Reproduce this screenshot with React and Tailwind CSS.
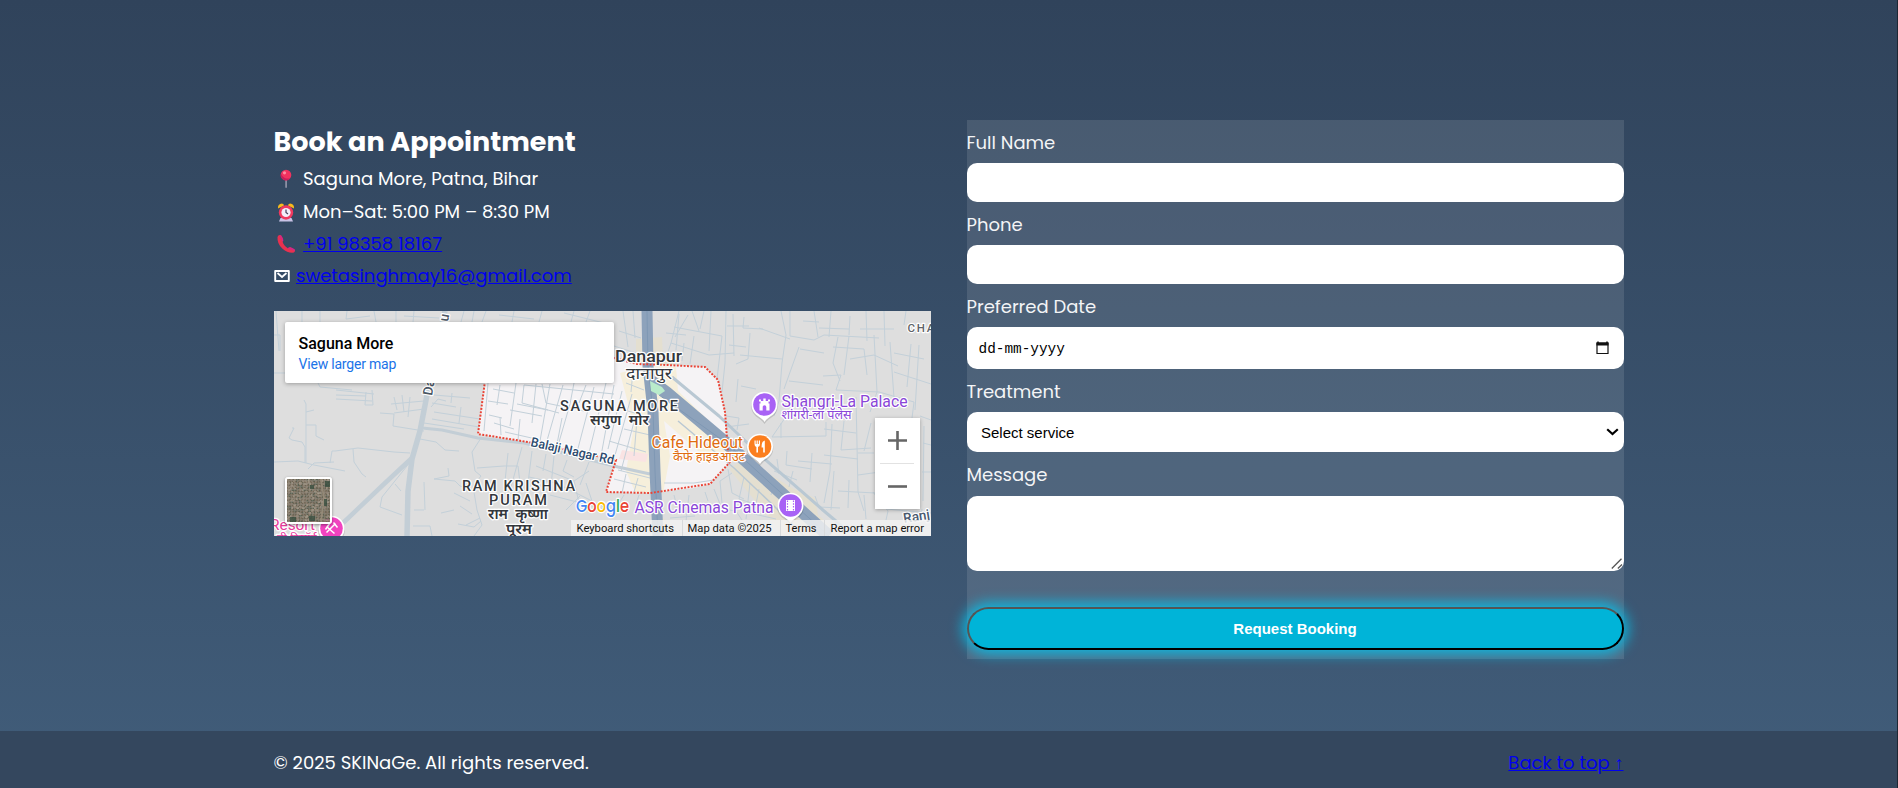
const MINOR_ROADS = [
  // north-west strip
  "M0 24H6V40", "M0 62H14", "M2 0L5 40", "M28 0V11", "M46 0V11", "M73 0L72 8L96 5", "M100 0L102 11", "M122 0V11", "M140 0L139 11M130 5L165 7",
  "M190 0L187 11M200 0L198 11M212 0L208 11", "M225 4L260 8M240 0L238 11M268 0L265 11M290 2L330 12M300 0L297 11M316 0L312 11",
  // west
  "M44 72L46 76L78 79", "M62 79L100 83M62 84L92 85M62 88L98 90", "M92 81L91 94H99L98 79", "M30 89L32 93V152", "M32 101L40 99", "M32 114H42V125L50 129",
  "M18 117L20 117L15 127L18 129L28 131L31 136V152", "M0 151L24 150L40 154L71 160", "M34 158L40 152L60 151", "M58 140L61 140L84 137L120 141L136 142",
  "M79 138L80 151L88 163L92 166", "M58 140L56 152", "M137 150L108 186L106 196L128 204", "M121 173L127 180", "M106 102L120 103L119 115L150 120",
  "M120 86L123 99M128 84L130 101M117 93L150 90M120 102L150 98M136 86L134 106", "M160 84L196 87M158 92L182 96M158 108L205 116M157 96L164 88L172 90",
  "M160 101L206 108M178 82L177 92M187 96L185 112M150 112L190 118", "M146 128L162 131L171 139L185 140", "M174 157L175 165L160 168L181 170L186 175L196 178",
  "M150 171L151 199M140 199H150M139 215L156 215L158 225", "M184 213L200 216L207 210", "M207 127L198 141L201 160L207 165L199 175L203 199L208 214L200 225",
  "M203 157L230 155L244 155L246 172M234 142L231 170M248 136L240 165L236 180", "M258 140L254 172M272 143L269 160M280 145L277 175M293 149L289 160L300 166M315 151L306 174",
  "M262 155L300 170L315 160M255 166L282 172L330 196M300 170L306 196M312 172L318 190", "M206 207L192 214M276 184L330 198M292 199L306 185", "M180 182L196 190M186 195L198 203M167 202L180 199",
  // Saguna More block
  "M214 72L210 120M219 78L240 82M214 90L234 93M215 104L228 107M226 74L223 94M242 72L236 115M250 74L248 92L285 102",
  "M262 73L258 112M276 73L266 130M289 74L272 133M300 72L296 93M296 93L283 138M312 74L305 92M320 76L302 145M332 72L315 142",
  "M236 99L268 105M231 121L262 128M243 93L274 99M268 73L272 92L310 100M220 112L240 118M226 106L227 124M246 108L244 129M288 107L283 133",
  "M340 74L327 145M348 80L334 138M358 83L338 155M365 92L347 160M354 100L374 106M350 118L376 124M335 130L372 141M344 159L376 167M340 168L372 176M352 163L348 182M364 167L360 181M390 172H420L440 169",
  "M352 72L370 79M359 60L357 81M363 108L360 145M250 74L290 78L340 83",
  // north, above the boundary
  "M340 35L368 44M345 20L367 27M349 0L354 36M359 0L361 27", "M391 50L397 32L405 0M397 32L435 44L460 42", "M405 3L402 39M414 4L401 26M400 16L448 25",
  "M418 0L425 20M430 0L426 18M437 0L435 40M448 25L443 68M452 0L451 52L448 81", "M392 22L412 24M410 32L408 50M420 25L416 53M453 15H475M459 3L460 45M470 6L469 17L489 18",
  "M476 22L474 48L462 53M485 17L516 28M455 34L472 36M466 44L508 48M507 0L512 24L508 52L505 90L500 105", "M516 0V25L540 29L550 24L605 27",
  "M540 0L544 26M557 0L555 26M576 5L575 24M592 0L593 30M610 0L611 35M529 10L545 11M545 17L575 18M586 18H620M632 0L630 14",
  // east
  "M525 36L510 78M515 70L549 74M526 38L550 42M564 26L559 52L566 70M559 36L590 38L593 64M575 25L570 64M549 65L567 64L562 79L605 81",
  "M576 48L600 44L624 55M600 24L603 81L596 101M616 31L620 87M620 61L657 73M637 33L633 76M620 42L650 48M645 34L641 99M605 81L640 91L638 107",
  "M467 75L482 78M464 68L462 91M511 107L498 126L552 125L552 111M452 105L465 107L463 119M452 116L475 113M507 112V127",
  "M582 86L584 181L590 200M550 118L582 122M558 113L556 160L550 192M570 110L567 139L597 137M584 142H600M550 144L584 148M584 164L613 160M513 140L512 154L538 158",
  "M519 160L515 176M524 150L558 153M538 142L536 171M503 148L505 163M500 160L523 169M560 160L557 199M564 180L601 182M575 169L574 197M590 184L592 208M599 181L614 200L612 209",
  "M612 198L657 202M648 198L647 209M646 105L657 109M649 132L657 134M648 161H657M650 115L649 190M597 112L590 140",
  // south
  "M454 158L458 182L470 188M458 162L446 170L448 192M470 166L465 188L490 196M400 184L402 192M415 184L412 210M431 181L434 190M440 178L448 198L462 200L468 209",
  "M476 172L472 208M485 178L480 203L502 208M396 207L421 205M365 184L362 193M350 184L345 192M500 172L497 184M541 185L545 196L566 197",
];

const HALO = { stroke: "#fff", strokeWidth: 2.4, paintOrder: "stroke", strokeLinejoin: "round" };

function Label({ x, y, w, size, color = "#33373c", children, weight = 500, spaced, rotate }) {
  return (
    <text
      x={x}
      y={y}
      fontSize={size}
      fill={color}
      fontWeight={weight}
      textLength={w}
      lengthAdjust={spaced ? "spacing" : "spacingAndGlyphs"}
      transform={rotate ? `rotate(${rotate} ${x} ${y})` : undefined}
      {...HALO}
    >
      {children}
    </text>
  );
}

function Pin({ x, y, color, children }) {
  return (
    <g transform={`translate(${x} ${y})`}>
      <path d="M0 18.5C-2 15-5.500 13.200-8.500 11A13.300 13.300 0 1 1 8.500 11C5.500 13.200 2 15 0 18.500Z" fill="#00000022" transform="translate(0 1)" />
      <path d="M0 17.500C-2 14-5.500 12.500-8.300 10.200A13 13 0 1 1 8.300 10.200C5.500 12.500 2 14 0 17.500Z" fill="#fff" />
      <circle r="11.300" fill={color} />
      {children}
    </g>
  );
}

function Satellite() {
  const tones = ["#7b705f", "#85796a", "#6f6658", "#8f8472", "#6a6656", "#7f7464", "#5c6253", "#766b5a", "#9a907f"];
  const cells = [];
  for (let i = 0; i < 29; i++) {
    for (let j = 0; j < 29; j++) {
      const n = Math.abs(Math.floor(Math.sin(i * 127.1 + j * 311.7) * 43758));
      cells.push(<rect key={i + "-" + j} x={i * 1.5} y={j * 1.5} width={1.7} height={1.7} fill={tones[n % 9]} />);
    }
  }
  return (
    <svg viewBox="0 0 43 43" className="h-full w-full">
      {cells}
      <path d="M34 0L37 20L34 43" stroke="#958a78" strokeWidth="1.600" fill="none" />
      <path d="M23 6h4v4h-4zM38 2h5v6h-5zM3 38h6v5H3zM22 37h6v5h-6zM37 20h3v7h-3z" fill="#374d3f" opacity=".8" />
    </svg>
  );
}

function MapDrawing() {
  return (
    <svg viewBox="0 0 657 225" className="block h-full w-full font-['Roboto','Noto_Sans',sans-serif]">
      <defs>
        <clipPath id="area">
          <path d="M211 72L214 47H340L363 53L393 54L431 56L444 69L451 101L454 141L456 151L436 173L420 177L376 182L332 181L342 149L254 131L204 123Z" />
        </clipPath>
      </defs>
      <rect width="657" height="225" fill="#dedede" />
      <path d="M362 28L388 26L389 48L402 54L404 78L386 86H362ZM470 148L520 178L541 187L544 204L568 225H510L455 158ZM387 205L410 225H386Z" fill="#e4dfd0" />
      <path d="M211 72L214 47H340L363 53L393 54L431 56L444 69L451 101L454 141L456 151L436 173L420 177L376 182L332 181L342 149L254 131L204 123Z" fill="#f5f3f5" />
      <g clipPath="url(#area)" fill="#f6efdb">
        <path d="M346 62L372 55L402 56L404 80L456 130L450 150L424 140L390 110L396 145L389 183H362L352 160L360 115Z" />
        <path d="M348 139L374 143L372 151L345 148Z" fill="#fae3e3" />
      </g>
      <g fill="none" stroke="#c3d0d9" strokeWidth="1" strokeLinejoin="round">
        {MINOR_ROADS.map((d) => (
          <path key={d} d={d} />
        ))}
      </g>
      <g fill="none" stroke="#c3ced6" strokeLinejoin="round">
        <path d="M171 0L153 84L146 120L138 148L134 180L133 225" strokeWidth="5.500" />
        <path d="M139 146L110 173L69 212" strokeWidth="4.500" />
        <path d="M148 117L168 119L204 127L250 132L344 156L376 163" strokeWidth="3" />
        <path d="M393 70L440 109L480 147L545 204L570 225" strokeWidth="3" stroke="#b9c8d3" transform="translate(5 -4)" />
        <path d="M404 110L460 157L500 195L530 225" strokeWidth="1.500" stroke="#b9c8d3" />
      </g>
      <g fill="none" stroke="#8da2bb" strokeLinejoin="round">
        <path d="M373 0L374 55L379 100L381 160L384 225" strokeWidth="11" />
        <path d="M377 70L393 82L451 131L505 180L555 225" strokeWidth="12.500" />
      </g>
      <g fill="none" stroke="#7f98b4" strokeWidth="1">
        <path d="M373 0L374 55L379 100L381 160L384 225M385 84L451 131L505 180L555 225" />
      </g>
      <path d="M376 70L388 76L391 80L385 84L377 80Z" fill="#b9ebcb" />
      <path
        d="M211 70L204 123L254 131L342 149L332 181L376 182L436 173L456 151L454 141L451 101L444 69L431 56L393 54L363 53L340 47"
        fill="none"
        stroke="#ea4335"
        strokeWidth="2"
        strokeDasharray="1.900 1.500"
      />

      <Label x={158} y={85} size={13.5} color="#4a5563" rotate={-80}>Da</Label>
      <Label x={174} y={11} size={13.5} color="#4a5563" rotate={-80}>u</Label>
      <Label x={341} y={51} w={67} size={17}>Danapur</Label>
      <Label x={352} y={68} w={46} size={16} weight={400}>दानापुर</Label>
      <Label x={286} y={100} w={118} size={14.5} spaced>SAGUNA MORE</Label>
      <Label x={316} y={114} w={59} size={14} weight={600}>सगुण &#160;मोर</Label>
      <Label x={256} y={135} w={85} size={13} color="#2c4a6e" rotate={12.5}>Balaji Nagar Rd</Label>
      <Label x={188} y={179.5} w={113} size={14.5} spaced>RAM KRISHNA</Label>
      <Label x={215} y={194} w={58} size={14.5} spaced>PURAM</Label>
      <Label x={214} y={208} w={60} size={14} weight={600}>राम &#160;कृष्णा</Label>
      <Label x={232} y={222.5} w={26} size={14} weight={600}>पूरम</Label>
      <Label x={633.5} y={21} w={27} size={11.5} color="#5f6368" spaced>CHA</Label>
      <Label x={630} y={212} size={13.5} color="#4a5a70" rotate={-9}>Ranj</Label>

      <Label x={507.5} y={95.5} w={126} size={16} color="#8a46d8" weight={400}>Shangri-La Palace</Label>
      <Label x={507.5} y={107.5} w={70} size={12} color="#8a46d8" weight={400}>शांगरी-ला पॅलेस</Label>
      <Label x={377.500} y={137} w={91.500} size={16} color="#e06c10" weight={400}>Cafe Hideout</Label>
      <Label x={399} y={149.500} w={72} size={12.5} color="#e06c10" weight={400}>कैफे हाइडआउट</Label>
      <Label x={360.500} y={202} w={139} size={16} color="#8a46d8" weight={400}>ASR Cinemas Patna</Label>
      <Label x={-4} y={218.5} w={45} size={15} color="#e6399b" weight={400}>Resort</Label>
      <Label x={3} y={230.5} w={40} size={11.5} color="#e6399b" weight={400}>डी रिसॉर्ट</Label>

      <Pin x={490.500} y={93.500} color="#a862f5">
        <path d="M-5 6V-1H-4V-3H-5.500V-5H-3.500V-3.500H-1.200V-6H1.200V-3.500H3.500V-5H5.500V-3H4V-1H5V6H1.800V2.500A1.800 1.800 0 0 0-1.800 2.500V6Z" fill="#fff" />
      </Pin>
      <Pin x={486} y={135.500} color="#fb7e1e">
        <path d="M-5.500-6V-2.500Q-5.500 0-3.600 .4V6H-2V.4Q0 0 0-2.500V-6H-1.200V-2.500H-2.200V-6H-3.400V-2.500H-4.300V-6ZM4.800 6V-6Q1.600-5 1.600 0V1H3.200V6Z" fill="#fff" />
      </Pin>
      <Pin x={516.500} y={194.500} color="#a862f5">
        <path d="M-4.500-5.500H4.500V5.500H-4.500Z" fill="#fff" />
        <path d="M-3-5V5M3-5V5" stroke="#a862f5" strokeWidth="1.200" strokeDasharray="1.500 1.300" />
      </Pin>
      <Pin x={57.5} y={217.500} color="#f143c0">
        <path d="M-5 4L4-5M-5-2L3 5M-6 1L-2-5M2 -6L6-1" stroke="#fff" strokeWidth="1.500" fill="none" />
      </Pin>

      <text x="302" y="201" fontSize="17.500" textLength="53" lengthAdjust="spacingAndGlyphs" className="font-['Poppins','Inter',sans-serif]" fontWeight="500" {...HALO}>
        <tspan fill="#4285f4">G</tspan>
        <tspan fill="#ea4335">o</tspan>
        <tspan fill="#fbbc04">o</tspan>
        <tspan fill="#4285f4">g</tspan>
        <tspan fill="#34a853">l</tspan>
        <tspan fill="#ea4335">e</tspan>
      </text>

      <rect x="297" y="209" width="360" height="16" fill="#f3f3f3" opacity=".82" />
      <path d="M408.500 209V225M506.500 209V225M550.500 209V225" stroke="#d8dadc" />
      <g fontSize="11" fill="#111">
        <text x="302.500" y="221" textLength="97.500" lengthAdjust="spacingAndGlyphs">Keyboard shortcuts</text>
        <text x="413.500" y="221" textLength="84" lengthAdjust="spacingAndGlyphs">Map data ©2025</text>
        <text x="511.500" y="221" textLength="31" lengthAdjust="spacingAndGlyphs">Terms</text>
        <text x="556.500" y="221" textLength="93.500" lengthAdjust="spacingAndGlyphs">Report a map error</text>
      </g>
    </svg>
  );
}

function MapEmbed() {
  return (
    <div className="relative mt-[18px] h-[225px] w-full overflow-hidden">
      <MapDrawing />
      <div className="absolute top-[11px] left-[11px] h-[61px] w-[329px] rounded-[2px] bg-white pt-[12px] pl-[14px] font-['Roboto',sans-serif] shadow-[0_1px_4px_rgba(0,0,0,0.3)]">
        <p className="text-[16px] leading-5 font-medium text-black">Saguna More</p>
        <p className="text-[14px] leading-5 tracking-[-0.2px] text-[#1a73e8]">View larger map</p>
      </div>
      <div className="absolute top-[166px] left-[11px] size-[47px] overflow-hidden rounded-[3px] border-2 border-white shadow-[0_1px_3px_rgba(0,0,0,0.4)]">
        <Satellite />
      </div>
      <div className="absolute top-[107px] left-[601px] flex h-[91px] w-[45px] flex-col items-center justify-between bg-white shadow-[0_1px_4px_rgba(0,0,0,0.3)]">
        <svg viewBox="0 0 45 45" className="size-[45px]">
          <path d="M13 22.500H32M22.500 13V32" stroke="#666" strokeWidth="2.600" />
        </svg>
        <div className="h-px w-[34px] shrink-0 bg-[#e2e2e2]" />
        <svg viewBox="0 0 45 45" className="size-[45px]">
          <path d="M13 22.500H32" stroke="#666" strokeWidth="2.600" />
        </svg>
      </div>
    </div>
  );
}

function PinIcon() {
  return (
    <svg viewBox="0 0 24 24" className="size-6">
      <rect x="11.200" y="11" width="1.800" height="10" rx=".9" fill="#8b8fa3" />
      <circle cx="12" cy="8" r="5.300" fill="#f1325f" />
      <path d="M7 6.500A5.300 5.300 0 0 0 16.500 11A7 7 0 0 1 7 6.500Z" fill="#c81f5b" />
      <circle cx="10.500" cy="5.800" r="1.600" fill="#ff8aa0" />
    </svg>
  );
}

function ClockIcon() {
  return (
    <svg viewBox="0 0 24 24" className="size-6">
      <path d="M4 7.500Q3.500 3 8 2.500Q10 3 10 4.500ZM20 7.500Q20.500 3 16 2.500Q14 3 14 4.500Z" fill="#f9b91c" />
      <path d="M6.500 17H17.500L19 20.500H5Z" fill="#c9c3e6" />
      <circle cx="12" cy="11.500" r="7.200" fill="#f0395f" />
      <circle cx="12" cy="11.500" r="4.600" fill="#f3eefa" />
      <path d="M12 8.500V11.500L14 13" stroke="#45405e" strokeWidth="1.200" fill="none" />
    </svg>
  );
}

function PhoneIcon() {
  return (
    <svg viewBox="0 0 24 24" className="size-6">
      <path d="M3.500 5Q3 12 8.500 16.700T20 20.500Q22 19 20.500 17.300L17 15.500Q15.500 15 13.800 16.300Q9.500 13.500 8.600 9.800L9.300 8.300Q9 5.500 7 3.300Q4.500 2 3.500 5Z" fill="#e8314f" />
      <path d="M7 3.300L9.300 8.300L8.600 9.800L5.500 4ZM13.800 16.300Q15.500 15 17 15.500L20.500 17.300L20.800 19Z" fill="#d3268b" />
    </svg>
  );
}

function MailIcon() {
  return (
    <svg viewBox="0 0 16 12" className="h-3 w-4">
      <path d="M1.200 1H14.800V11H1.200Z" fill="none" stroke="#fff" strokeWidth="1.900" strokeLinejoin="round" />
      <path d="M3.500 3L8 7L12.500 3" fill="none" stroke="#fff" strokeWidth="1.700" />
    </svg>
  );
}

const LABEL = "block h-[43px] pt-px leading-[43px] text-[#f3f4f6]";
const FIELD = "block w-full rounded-[10px] bg-white";

export default function App() {
  return (
    <div className="flex h-[788px] border-r border-[#1d2733] bg-linear-to-b from-[#30435b] to-[#415d7a] font-['Poppins',sans-serif] text-[18px] text-white">
      <div className="flex w-full flex-col justify-between">
        <section className="mx-auto grid w-[1350px] grid-cols-2 gap-9 pt-[120px]">
          <div>
            <h2 className="h-[43px] text-[27px] leading-[43px] font-bold">Book an Appointment</h2>
            <ul className="leading-[32.4px]">
              <li className="flex items-center gap-[5.5px]"><PinIcon />Saguna More, Patna, Bihar</li>
              <li className="flex items-center gap-[5.5px] pt-px"><ClockIcon />Mon–Sat: 5:00 PM – 8:30 PM</li>
              <li className="-mt-px flex items-center gap-[5.5px]"><PhoneIcon /><a href="#" className="text-[#0000ee] underline">+91 98358 18167</a></li>
              <li className="flex items-center gap-[6.5px]"><MailIcon /><a href="#" className="text-[#0000ee] underline">swetasinghmay16@gmail.com</a></li>
            </ul>
            <MapEmbed />
          </div>

          <form className="h-[539px] bg-white/11">
            <label className={LABEL}>Full Name</label>
            <input className={`${FIELD} h-[39px]`} />
            <label className={LABEL}>Phone</label>
            <input className={`${FIELD} h-[39px]`} />
            <label className={LABEL}>Preferred Date</label>
            <div className="flex h-[42px] w-full items-center justify-between rounded-[10px] bg-white pr-[15px] pl-3 text-black">
              <span className="pt-[3px] font-['Liberation_Mono',monospace] text-[14.4px]">dd-mm-yyyy</span>
              <svg viewBox="0 0 13 14" className="h-[14px] w-[13px]">
                <path d="M2 0.500V2M11 0.500V2" stroke="#111" strokeWidth="1.500" />
                <path d="M1 2H12V12.500H1Z" fill="none" stroke="#111" strokeWidth="1.200" />
                <path d="M.5 1.500H12.500V4.500H.5Z" fill="#111" />
              </svg>
            </div>
            <label className={LABEL}>Treatment</label>
            <div className="flex h-[40px] w-full items-center justify-between rounded-[10px] bg-white pr-[5px] pl-[14.5px] font-['Liberation_Sans',sans-serif] text-[15px] text-black">
              <span className="pt-0.5">Select service</span>
              <svg viewBox="0 0 13 8" className="h-2 w-[13px]">
                <path d="M1.200 1.200L6.500 6L11.800 1.200" fill="none" stroke="#000" strokeWidth="2.200" />
              </svg>
            </div>
            <label className={LABEL}>Message</label>
            <div className="relative mt-px">
              <textarea className={`${FIELD} h-[75px] resize-none`} />
              <svg viewBox="0 0 12 12" className="absolute right-[1px] bottom-[1px] size-3">
                <path d="M.8 10.500L10.500 .8M6.800 10.500L11 6.500" stroke="#555" strokeWidth="1.300" />
              </svg>
            </div>
            <button
              type="button"
              className="mt-9 block h-[43px] w-full rounded-full border-2 border-t-[#555] border-r-black border-b-black border-l-[#555] bg-[#00b4d8] pt-0.5 font-['Liberation_Sans',sans-serif] text-[15px] font-bold shadow-[0_0_14px_4px_rgba(0,200,242,0.85)]"
            >
              Request Booking
            </button>
          </form>
        </section>

        <footer className="h-[57px] bg-[#34475e]">
          <div className="mx-auto flex h-full w-[1350px] items-center justify-between pt-1.5">
            <p>© 2025 SKINaGe. All rights reserved.</p>
            <a href="#" className="text-[#0000ee] underline">Back to top ↑</a>
          </div>
        </footer>
      </div>
    </div>
  );
}
